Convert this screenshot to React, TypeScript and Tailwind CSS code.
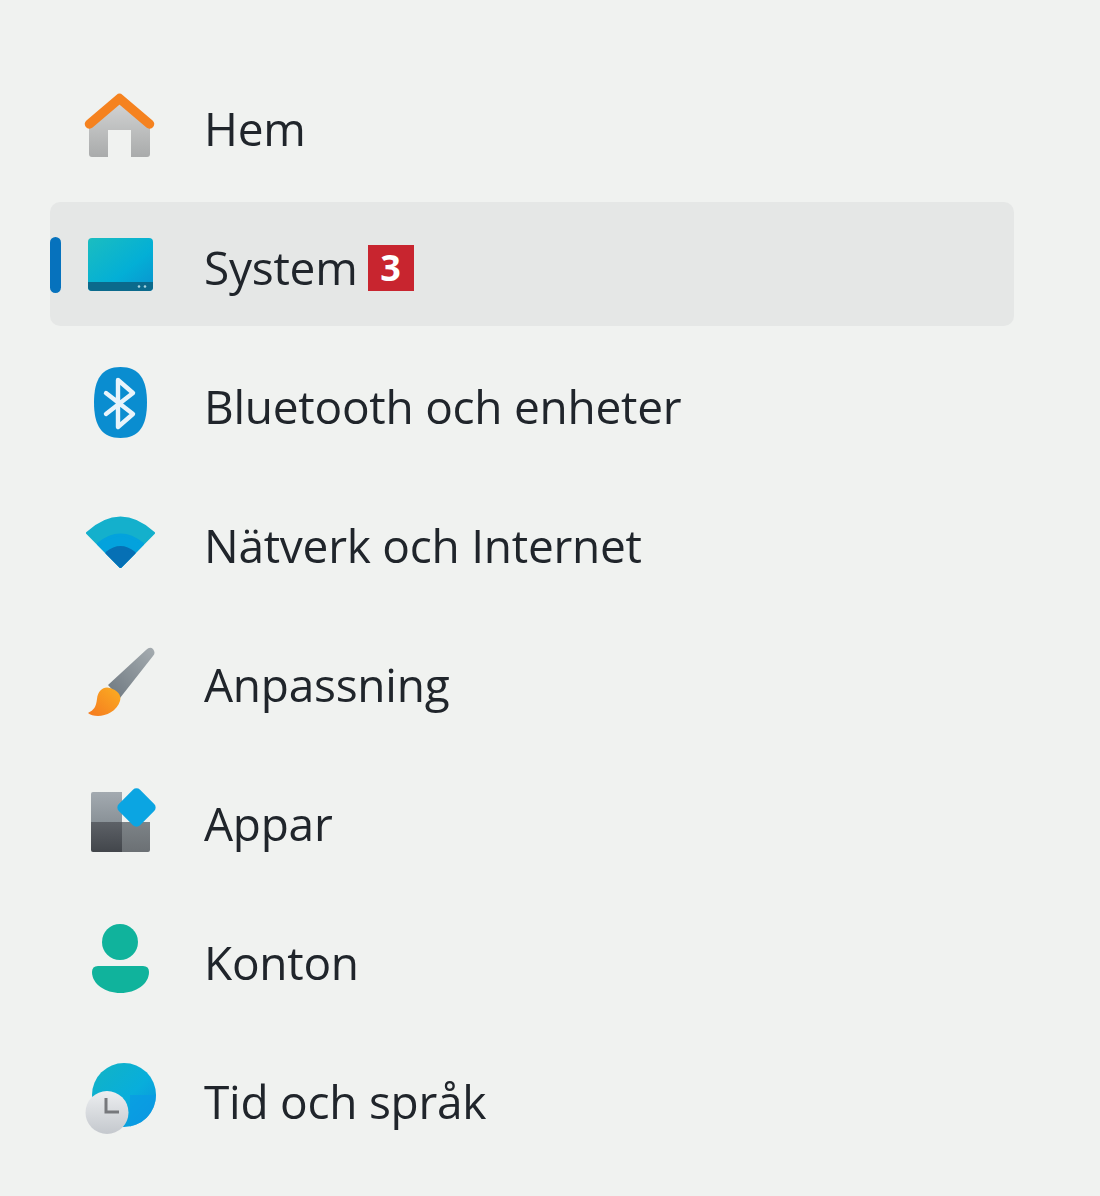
import React from 'react';

const HomeIcon = () => (
  <svg viewBox="0 0 72 72" className="w-[72px] h-[72px]">
    <defs>
      <linearGradient id="homeWall" x1="0" y1="0" x2="0" y2="1">
        <stop offset="0" stopColor="#d4d5d5" />
        <stop offset="1" stopColor="#a9abab" />
      </linearGradient>
    </defs>
    <path d="M35.5 11 L5 36 V65 Q5 68 8 68 H24 V41 H47 V68 H63 Q66 68 66 65 V36 Z" fill="url(#homeWall)" />
    <path d="M5.5 35 L35.5 9.5 L65.5 35" fill="none" stroke="#f5821f" strokeWidth="9.5" strokeLinecap="round" strokeLinejoin="round" />
  </svg>
);

const SystemIcon = () => (
  <svg viewBox="0 0 72 72" className="w-[72px] h-[72px]">
    <defs>
      <linearGradient id="sysScreen" x1="0" y1="0" x2="1" y2="1">
        <stop offset="0" stopColor="#1bbdc0" />
        <stop offset="0.6" stopColor="#03afd6" />
        <stop offset="1" stopColor="#0a93cf" />
      </linearGradient>
    </defs>
    <rect x="4" y="10" width="65" height="53" rx="4" fill="url(#sysScreen)" />
    <path d="M4 54 H69 V59 Q69 63 65 63 H8 Q4 63 4 59 Z" fill="#0b6a8c" />
    <circle cx="55" cy="58.5" r="1.3" fill="#a8d4e0" />
    <circle cx="61" cy="58.5" r="1.3" fill="#a8d4e0" />
  </svg>
);

const BluetoothIcon = () => (
  <svg viewBox="0 0 72 72" className="w-[72px] h-[72px]">
    <path d="M36.5 0 C55 0 63 12 63 35.5 C63 59 55 71 36.5 71 C18 71 10 59 10 35.5 C10 12 18 0 36.5 0 Z" fill="#0a8dd0" />
    <path d="M22 26 L49 47 L34 60 V13 L49 26 L22 47" fill="none" stroke="#e8f4fb" strokeWidth="4.4" strokeLinejoin="round" strokeLinecap="round" />
  </svg>
);

const WifiIcon = () => (
  <svg viewBox="0 0 72 72" className="w-[72px] h-[72px]">
    <path d="M3.5 27 Q36.5 -3 69.5 27 L36.5 60.5 Z" fill="#14b0cc" stroke="#14b0cc" strokeWidth="3" strokeLinejoin="round" />
    <path d="M14.5 38 Q36.5 20 58.5 38 L36.5 60.5 Z" fill="#03a2dd" stroke="#03a2dd" strokeWidth="3" strokeLinejoin="round" />
    <path d="M23 47 Q36.5 36 50 47 L36.5 60.5 Z" fill="#0670b5" stroke="#0670b5" strokeWidth="3" strokeLinejoin="round" />
  </svg>
);

const BrushIcon = () => (
  <svg viewBox="0 0 72 72" className="w-[72px] h-[72px]">
    <defs>
      <linearGradient id="brushHandle" x1="0" y1="1" x2="1" y2="0">
        <stop offset="0" stopColor="#6e7880" />
        <stop offset="1" stopColor="#a5acb0" />
      </linearGradient>
      <linearGradient id="brushTip" x1="0" y1="1" x2="1" y2="0">
        <stop offset="0" stopColor="#f5791f" />
        <stop offset="1" stopColor="#fbae22" />
      </linearGradient>
    </defs>
    <path d="M24 40 L62 5 Q66 1 69 4 Q72 8 69 11 L36 53 Z" fill="url(#brushHandle)" />
    <path d="M4 68 C10 65 12 62 13 54 C14 45 20 41 26 43 C33 45 38 50 36 56 C33 66 22 71 14 71 C10 71 6 70 4 68 Z" fill="url(#brushTip)" />
  </svg>
);

const AppsIcon = () => (
  <svg viewBox="0 0 72 72" className="w-[72px] h-[72px]">
    <defs>
      <linearGradient id="appTl" x1="0" y1="0" x2="0" y2="1">
        <stop offset="0" stopColor="#a3aab0" />
        <stop offset="1" stopColor="#8a9298" />
      </linearGradient>
      <linearGradient id="appBl" x1="0" y1="0" x2="0" y2="1">
        <stop offset="0" stopColor="#5d6167" />
        <stop offset="1" stopColor="#42464b" />
      </linearGradient>
      <linearGradient id="appBr" x1="0" y1="0" x2="0" y2="1">
        <stop offset="0" stopColor="#7d8387" />
        <stop offset="1" stopColor="#6b7074" />
      </linearGradient>
    </defs>
    <path d="M7 10 Q7 8 9 8 H38 V38 H7 Z" fill="url(#appTl)" />
    <path d="M7 38 H38 V68 H9 Q7 68 7 66 Z" fill="url(#appBl)" />
    <path d="M38 38 H66 V66 Q66 68 64 68 H38 Z" fill="url(#appBr)" />
    <rect x="37.5" y="8.5" width="30" height="30" rx="5" transform="rotate(45 52.5 23.5)" fill="#0ba5e2" />
  </svg>
);

const AccountIcon = () => (
  <svg viewBox="0 0 72 72" className="w-[72px] h-[72px]">
    <circle cx="36" cy="19" r="18" fill="#10b39c" />
    <path d="M14 43 H59 Q65 43 65 49 C65 61 52 70 36.5 70 C21 70 8 61 8 49 Q8 43 14 43 Z" fill="#10b39c" />
  </svg>
);

const TimeIcon = () => (
  <svg viewBox="0 0 72 72" className="w-[72px] h-[72px]">
    <defs>
      <linearGradient id="globe" x1="0" y1="0" x2="1" y2="1">
        <stop offset="0" stopColor="#12b3c4" />
        <stop offset="0.55" stopColor="#08aedb" />
        <stop offset="1" stopColor="#0b8fdf" />
      </linearGradient>
      <linearGradient id="clockFace" x1="0" y1="0" x2="0" y2="1">
        <stop offset="0" stopColor="#eceef0" />
        <stop offset="1" stopColor="#c4c8cd" />
      </linearGradient>
    </defs>
    <circle cx="40" cy="33" r="32" fill="url(#globe)" />
    <path d="M46 33 H72 A32 32 0 0 1 46 64.4 Z" fill="#0a9ae4" opacity="0.7" />
    <circle cx="23" cy="50.5" r="21.5" fill="url(#clockFace)" />
    <path d="M22 36 V50 H35" fill="none" stroke="#76787c" strokeWidth="3" />
  </svg>
);

const ITEMS = [
  { label: 'Hem', icon: <HomeIcon /> },
  { label: 'System', icon: <SystemIcon />, active: true },
  { label: 'Bluetooth och enheter', icon: <BluetoothIcon /> },
  { label: 'Nätverk och Internet', icon: <WifiIcon /> },
  { label: 'Anpassning', icon: <BrushIcon /> },
  { label: 'Appar', icon: <AppsIcon /> },
  { label: 'Konton', icon: <AccountIcon /> },
  { label: 'Tid och språk', icon: <TimeIcon /> },
];

export default function App() {
  return (
    <div className="w-[1100px] h-[1196px] overflow-hidden bg-[#f0f2f0] pt-[63px] pl-[50px] font-['Open_Sans',sans-serif]">
      <nav className="w-[964px] flex flex-col gap-[15px]">
        {ITEMS.map((item) => (
          <div
            key={item.label}
            className={`relative h-[124px] flex items-center pl-[34px] rounded-[10px] ${
              item.active ? 'bg-[#e5e7e6]' : ''
            }`}
          >
            {item.active && (
              <div className="absolute left-0 top-[35px] w-[11px] h-[56px] rounded-full bg-[#0672bd] blur-[0.5px]" />
            )}
            <div className="w-[72px] h-[72px] blur-[0.7px]">{item.icon}</div>
            <span className="ml-[48px] pt-[6px] text-[46px] leading-none tracking-[-0.25px] text-[#20252b] blur-[0.5px]">
              {item.label}
            </span>
            {item.active && (
              <span className="ml-[10px] mt-[8px] w-[46px] h-[46px] flex items-center justify-center bg-[#c8252f] text-white text-[36px] font-bold leading-none">
                3
              </span>
            )}
          </div>
        ))}
      </nav>
    </div>
  );
}
